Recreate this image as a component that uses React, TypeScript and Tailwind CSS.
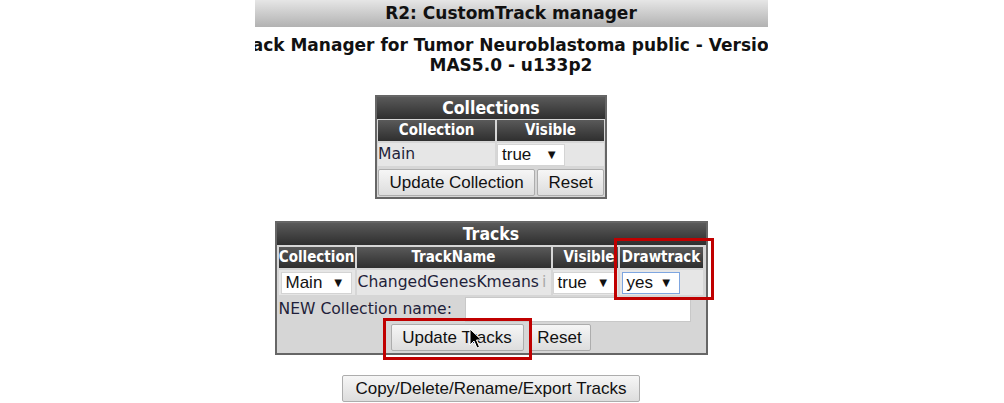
import React from "react";

const hdr =
  "bg-gradient-to-b from-[#5a5a5a] to-[#2f2f2f] text-white font-bold text-center font-['DejaVu_Sans_Condensed','DejaVu_Sans',sans-serif] font-stretch-condensed whitespace-nowrap overflow-hidden";
const btn =
  "border border-[#adadad] rounded-[2px] bg-gradient-to-b from-[#f6f6f6] to-[#dddddd] text-[#111] text-[17px] leading-none flex items-center justify-center font-['Liberation_Sans',sans-serif] whitespace-nowrap";

function Select({ value, width, focus }: { value: string; width: number; focus?: boolean }) {
  return (
    <div
      className={`h-[22px] bg-white flex items-center justify-between pl-[4px] pr-[6px] text-[17px] text-[#111] font-['Liberation_Sans',sans-serif] border ${
        focus ? "border-[#7ea6e0]" : "border-[#d4d4d4]"
      }`}
      style={{ width }}
    >
      <span>{value}</span>
      <span className="text-[13px]">▼</span>
    </div>
  );
}

function Cursor() {
  return (
    <svg className="absolute left-[469px] top-[328px]" width="14" height="22" viewBox="0 0 14 22">
      <path d="M1 1 L1 17 L5 13 L8 20 L10.5 19 L7.5 12 L12.5 12 Z" fill="#000" stroke="#fff" strokeWidth="1" />
    </svg>
  );
}

export default function App() {
  return (
    <div className="relative w-[1004px] h-[403px] bg-white overflow-hidden flex flex-col items-center font-['DejaVu_Sans',sans-serif]">
      {/* title */}
      <div className="ml-[18px] w-[513px] h-[27px] shrink-0 bg-gradient-to-b from-[#e6e6e6] to-[#b2b2b2] flex items-center justify-center text-[17px] font-bold text-[#111]">
        R2: CustomTrack manager
      </div>

      {/* subtitle */}
      <div className="ml-[18px] w-[513px] mt-[8px] shrink-0 text-[17px] font-bold text-[#111] leading-[20px]">
        <div className="flex justify-center whitespace-nowrap overflow-hidden">
          <span className="mr-[80px] shrink-0">CustomTrack Manager for Tumor Neuroblastoma public - Version</span>
        </div>
        <div className="text-center">MAS5.0 - u133p2</div>
      </div>

      {/* collections */}
      <div className="mr-[22px] mt-[20px] w-[232px] border-2 border-[#666] bg-[#d6d6d6] shrink-0">
        <div className={`${hdr} h-[22px] text-[17.5px] leading-[22px]`}>Collections</div>
        <div className="grid grid-cols-[117px_107px] gap-[2px] p-[1px] text-[15px]">
          <div className={`${hdr} h-[21px] leading-[21px]`}>Collection</div>
          <div className={`${hdr} h-[21px] leading-[21px]`}>Visible</div>
          <div className="h-[23px] bg-[#e6e6e6] flex items-center text-[#1f1f3a] text-[15.6px]">Main</div>
          <div className="h-[23px] bg-[#e6e6e6] flex items-center">
            <Select value="true" width={68} />
          </div>
          <div className="col-span-2 flex gap-[2px] h-[28px] pt-[1px]">
            <div className={`${btn} w-[158px] h-[27px]`}>Update Collection</div>
            <div className={`${btn} w-[67px] h-[27px]`}>Reset</div>
          </div>
        </div>
      </div>

      {/* tracks */}
      <div className="mr-[22px] mt-[22px] w-[433px] border-2 border-[#666] bg-[#d6d6d6] shrink-0">
        <div className={`${hdr} h-[22px] text-[17.5px] leading-[22px]`}>Tracks</div>
        <div className="grid grid-cols-[76px_194px_65px_83px] gap-[2px] p-[2px] text-[15px]">
          <div className={`${hdr} h-[21px] leading-[21px]`}>Collection</div>
          <div className={`${hdr} h-[21px] leading-[21px]`}>TrackName</div>
          <div className={`${hdr} h-[21px] leading-[21px] text-right pr-[3px]`}>Visible</div>
          <div className={`${hdr} h-[21px] leading-[21px]`}>Drawtrack</div>
          <div className="h-[25px] bg-[#e6e6e6] flex items-center pl-[2px]">
            <Select value="Main" width={71} />
          </div>
          <div className="h-[25px] bg-[#e6e6e6] flex items-center overflow-hidden whitespace-nowrap text-[15.6px] text-[#1f1f3a] pl-[1px]">
            ChangedGenesKmeans <span className="text-[#aaa] ml-[3px]">i</span>
          </div>
          <div className="h-[25px] bg-[#e6e6e6] flex items-center">
            <Select value="true" width={64} />
          </div>
          <div className="h-[25px] bg-[#e6e6e6] flex items-center pl-[2px]">
            <Select value="yes" width={58} focus />
          </div>
          <div className="col-span-4 h-[25px] flex items-center text-[15.6px] text-[#1f1f3a]">
            <span className="w-[186px] whitespace-nowrap">NEW Collection name:</span>
            <div className="w-[226px] h-[25px] bg-white border border-[#c8c8c8]" />
          </div>
          <div className="col-span-4 h-[27px] flex justify-center gap-[5px]">
            <div className={`${btn} w-[133px] h-[27px]`}>Update Tracks</div>
            <div className={`${btn} w-[62px] h-[27px]`}>Reset</div>
          </div>
        </div>
      </div>

      {/* copy */}
      <div className={`${btn} mr-[22px] mt-[20px] w-[298px] h-[27px] shrink-0`}>
        Copy/Delete/Rename/Export Tracks
      </div>

      {/* highlights */}
      <div className="absolute left-[614px] top-[238px] w-[100px] h-[62px] border-[3px] border-[#c00000]" />
      <div className="absolute left-[383px] top-[318px] w-[149px] h-[42px] border-[3px] border-[#c00000]" />
      <Cursor />
    </div>
  );
}
